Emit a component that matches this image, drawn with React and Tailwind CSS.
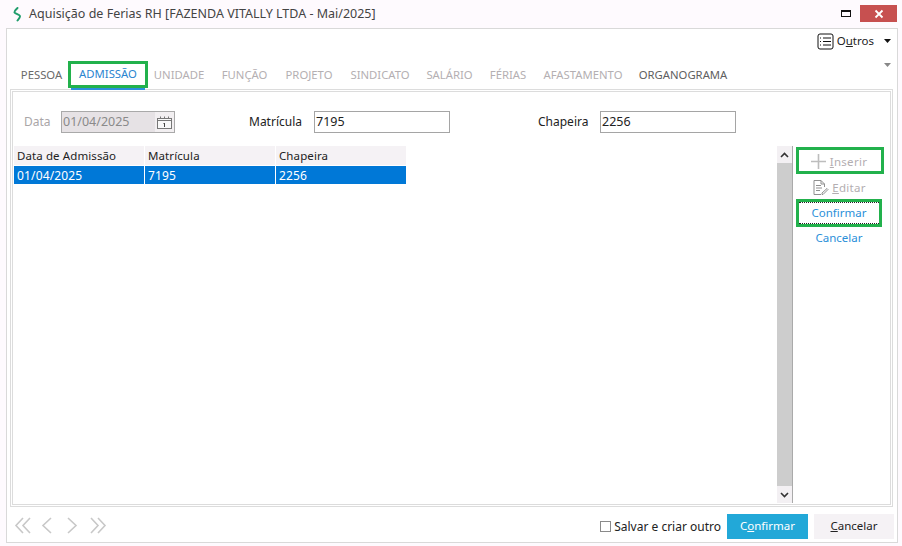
import React from "react";

function Tab({ children, w, muted, dark }) {
  return (
    <div className={`flex items-center justify-center pt-[2px] ${w} text-[11.3px] ${muted ? "text-[#b4afb2]" : dark ? "text-[#5f5f5f]" : "text-[#6a6a6a]"}`}>
      {children}
    </div>
  );
}

function Field({ value, className, disabled, children }) {
  return (
    <div className={`h-[22px] border flex items-center pl-[1px] text-[12.5px] ${disabled ? "bg-[#e6e2e5] border-[#a9a9a9] text-[#8a8a8a]" : "bg-white border-[#a5a5a5] text-[#222]"} ${className}`}>
      <span className="flex-1">{value}</span>
      {children}
    </div>
  );
}

function Th({ children, w }) {
  return <div className={`${w} h-[19px] flex items-center pl-[3px] border-r border-white text-[#222] bg-[#f5f2f5] text-[11.5px] tracking-[0.1px]`}>{children}</div>;
}
function Td({ children, w }) {
  return <div className={`${w} h-[18px] flex items-center pl-[3px] pt-[2px] border-r border-white text-white bg-[#0078d7] text-[12px] tracking-[0.15px]`}>{children}</div>;
}

export default function App() {
  return (
    <div className="w-[902px] h-[546px] bg-[#fefafe] flex flex-col overflow-hidden text-[12px] text-[#333]" style={{ fontFamily: '"Noto Sans", "Open Sans", sans-serif' }}>
      {/* title bar */}
      <div className="h-[28px] flex items-center shrink-0">
        <svg className="ml-[12px] mr-[7px]" width="10" height="15" viewBox="0 0 10 15" fill="none">
          <path d="M5.5 1 C3.5 3 2 4 2.5 5.5 C3.5 7 7.5 7.5 8 9 C8.2 10.5 6.5 12 5.5 13.5" stroke="#1f9d6b" strokeWidth="1.9" strokeLinecap="round" strokeLinejoin="round" />
        </svg>
        <span className="text-[12.5px] text-[#444]">Aquisição de Ferias RH [FAZENDA VITALLY LTDA - Mai/2025]</span>
        <div className="ml-auto flex items-center">
          <div className="w-[10px] h-[7px] border border-[#111] border-t-[2px] mr-[9px] mb-[1px]" />
          <div className="w-[37px] h-[17px] bg-[#c75050] flex items-center justify-center mr-[5px] mb-[1px]">
            <svg width="10" height="10" viewBox="0 0 10 10"><path d="M1.5 1.5 L8.5 8.5 M8.5 1.5 L1.5 8.5" stroke="#fff" strokeWidth="1.8" /></svg>
          </div>
        </div>
      </div>

      {/* main panel */}
      <div className="ml-[6px] w-[892px] h-[515px] bg-white border border-[#d9d9d9] flex flex-col">
        <div className="h-[28px] flex items-center justify-end shrink-0 pr-[6px] pb-[4px]">
          <svg width="17" height="17" viewBox="0 0 17 17" fill="none" className="mr-[3px]">
            <rect x="1" y="1" width="15" height="15" rx="2" stroke="#111" strokeWidth="1" />
            <path d="M6 5 H14 M6 8.5 H14 M6 12 H14" stroke="#111" />
            <path d="M3 5 H4 M3 8.5 H4 M3 12 H4" stroke="#111" />
          </svg>
          <span className="text-[11.5px] text-[#222]">O<span className="underline">u</span>tros</span>
          <svg width="7" height="4" viewBox="0 0 7 4" className="ml-[10px]"><path d="M0 0 H7 L3.5 4 Z" fill="#111" /></svg>
        </div>
        <div className="relative h-[32px] shrink-0">
          <svg width="7" height="4" viewBox="0 0 7 4" className="absolute right-[6px] top-[6px]"><path d="M0 0 H7 L3.5 4 Z" fill="#888" /></svg>
          <div className="flex items-stretch h-[27px] mt-[4px] ml-[13px]">
            <Tab w="w-[43px]">PESSOA</Tab>
            <div className="w-[80px] h-[27px] ml-[5px] border-[3px] border-[#22b14c] flex items-center justify-center text-[11.3px] text-[#2a85d0] relative">
              ADMISSÃO
              <div className="absolute left-0 right-0 bottom-[-5px] h-[2px] bg-[#2a8fdc]" />
            </div>
            <Tab w="w-[50px] ml-[6px]" muted>UNIDADE</Tab>
            <Tab w="w-[45px] ml-[18px]" muted>FUNÇÃO</Tab>
            <Tab w="w-[48px] ml-[18px]" muted>PROJETO</Tab>
            <Tab w="w-[58px] ml-[18px]" muted>SINDICATO</Tab>
            <Tab w="w-[45px] ml-[18px]" muted>SALÁRIO</Tab>
            <Tab w="w-[36px] ml-[18px]" muted>FÉRIAS</Tab>
            <Tab w="w-[76px] ml-[19px]" muted>AFASTAMENTO</Tab>
            <Tab w="w-[88px] ml-[18px]" dark>ORGANOGRAMA</Tab>
          </div>
        </div>

        {/* tab page, double border */}
        <div className="ml-[3px] w-[883px] h-[418px] border border-[#dcdcdc] p-[1px] shrink-0">
          <div className="w-full h-full border border-[#dcdcdc] flex flex-col">
            <div className="flex items-center h-[22px] mt-[19px] shrink-0 text-[12px]">
              <span className="ml-[11px] w-[37px] text-[#aaa6a8]">Data</span>
              <Field value="01/04/2025" disabled className="w-[114px]">
                <div className="w-[19px] h-[20px] bg-[#f2eff1] flex items-center justify-center">
                  <svg width="15" height="13" viewBox="0 0 15 13" fill="none">
                    <rect x="0.5" y="2.5" width="14" height="10" stroke="#777" fill="#f8f8f8" />
                    <path d="M0.5 4.5 H14.5" stroke="#777" />
                    <path d="M3.5 0.5 V2 M7.5 0.5 V2 M11.5 0.5 V2" stroke="#777" />
                    <path d="M7.5 7 V11 M6.5 8 L7.5 7" stroke="#444" />
                  </svg>
                </div>
              </Field>
              <span className="ml-[74px] w-[65px] text-[#222]">Matrícula</span>
              <Field value="7195" className="w-[136px]" />
              <span className="ml-[88px] w-[62px] text-[#222]">Chapeira</span>
              <Field value="2256" className="w-[136px]" />
            </div>

            <div className="flex mt-[13px] flex-1 min-h-0">
              <div className="w-[392px] ml-[1px] shrink-0 h-fit">
                <div className="flex mb-[1px]"><Th w="w-[131px]">Data de Admissão</Th><Th w="w-[131px]">Matrícula</Th><Th w="w-[130px] border-r-0">Chapeira</Th></div>
                <div className="flex"><Td w="w-[131px]">01/04/2025</Td><Td w="w-[131px]">7195</Td><Td w="w-[130px] border-r-0">2256</Td></div>
              </div>

              {/* scrollbar */}
              <div className="ml-[371px] w-[16px] h-[357px] flex flex-col border-r border-[#aaa] shrink-0">
                <div className="h-[17px] bg-[#f3f0f3] flex items-center justify-center">
                  <svg width="9" height="6" viewBox="0 0 9 6" fill="none"><path d="M1 5 L4.5 1.5 L8 5" stroke="#333" strokeWidth="1.6" /></svg>
                </div>
                <div className="flex-1 bg-[#cdcdcd]" />
                <div className="h-[17px] bg-[#f3f0f3] flex items-center justify-center">
                  <svg width="9" height="6" viewBox="0 0 9 6" fill="none"><path d="M1 1 L4.5 4.5 L8 1" stroke="#333" strokeWidth="1.6" /></svg>
                </div>
              </div>

              {/* side actions */}
              <div className="ml-[3px] flex flex-col items-start w-[90px] shrink-0 text-[11.5px]">
                <div className="w-[88px] h-[27px] mt-[1px] pt-[2px] border-[3px] border-[#22b14c] flex items-center justify-center text-[#b3aeb1] gap-[3px] tracking-[0.3px]">
                  <svg width="17" height="17" viewBox="0 0 17 17" className="ml-[-3px]"><path d="M8.5 1 V16 M1 8.5 H16" stroke="#bdbdbd" strokeWidth="1.6" /></svg>
                  <span><span className="underline">I</span>nserir</span>
                </div>
                <div className="w-[88px] h-[25px] pt-[2px] flex items-center justify-center text-[#b3aeb1] gap-[3px] tracking-[0.3px]">
                  <svg width="17" height="17" viewBox="0 0 17 17" fill="none" stroke="#8f8f8f" className="ml-[-2px]">
                    <path d="M2 1.5 H9 L12.5 5 V8 M9 1.5 V5 H12.5 M2 1.5 V15.5 H9" />
                    <path d="M4 6.5 H9 M4 9 H10 M4 11.5 H8" />
                    <path d="M10 14 L15 9.5 L16 10.5 L11 15.5 H10 Z" />
                  </svg>
                  <span><span className="underline">E</span>ditar</span>
                </div>
                <div className="w-[86px] h-[28px] border-[3px] border-[#22b14c] flex items-center justify-center text-[#2b8fd9]">
                  <div className="w-full h-full border-y border-dotted border-[#222] flex items-center justify-center">Confirmar</div>
                </div>
                <div className="w-[86px] h-[22px] flex items-center justify-center text-[#2b8fd9]">Cancelar</div>
              </div>
            </div>
          </div>
        </div>

        {/* footer */}
        <div className="flex items-center flex-1 pt-[4px]">
          <svg width="94" height="17" viewBox="0 0 94 17" fill="none" stroke="#c8c8c8" strokeWidth="1.6" className="ml-[7px] mt-[-2px]">
            <path d="M9 1 L2 8.5 L9 16 M16 1 L9 8.5 L16 16" />
            <path d="M37 1 L29 8.5 L37 16" />
            <path d="M54 1 L62 8.5 L54 16" />
            <path d="M84 1 L91 8.5 L84 16 M77 1 L84 8.5 L77 16" />
          </svg>
          <div className="ml-auto flex items-center">
            <div className="w-[11px] h-[11px] border border-[#8a8a8a] bg-white mr-[3px] ml-[-1px]" />
            <span className="text-[12px] text-[#222] mr-[6px]">Salvar e criar outro</span>
            <div className="w-[81px] h-[25px] pb-[1px] bg-[#22a8d8] text-white flex items-center justify-center text-[11.5px]">C<span className="underline">o</span>nfirmar</div>
            <div className="w-[80px] h-[25px] pb-[1px] bg-[#f5f2f5] text-[#222] flex items-center justify-center ml-[6px] mr-[3px] text-[11.5px]"><span className="underline">C</span>ancelar</div>
          </div>
        </div>
      </div>
    </div>
  );
}
